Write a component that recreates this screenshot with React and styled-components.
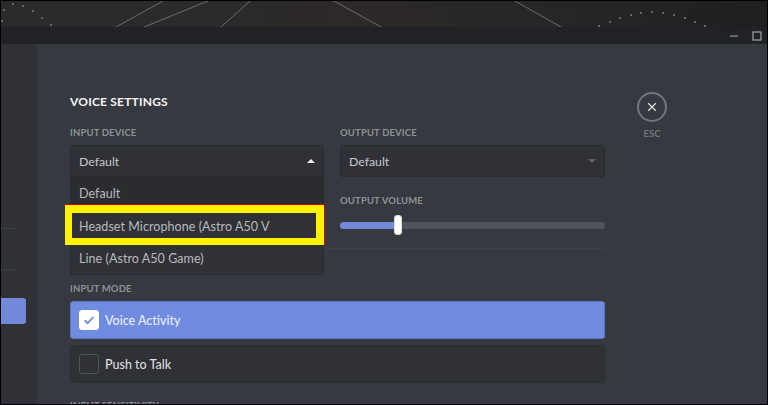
import { createGlobalStyle } from "styled-components";
import styled from "styled-components";

const leftDots = [[2, 20], [4, 9], [13, 3], [23, 5], [33, 10], [42, 17], [51, 24]];
const rightDots = [[215, 25], [226, 21], [236, 17], [247, 14], [257, 12], [268, 11], [279, 12], [290, 14], [301, 17], [311, 21], [321, 25]];
const bannerLines = [
  [115, 26, 162, 0],
  [143, 26, 207, 0],
  [220, 26, 249, 0],
  [333, 0, 380, 26],
  [514, 0, 560, 26],
];

const App = () => {
  return (
    <Frame>
      <GlobalStyle />
      <Banner>
        <svg width="766" height="26" viewBox="0 0 766 26">
          {bannerLines.map(([x1, y1, x2, y2]) => (
            <line key={x1} x1={x1} y1={y1} x2={x2} y2={y2} stroke="#6e6c6b" strokeWidth="1" />
          ))}
          {leftDots.map(([cx, cy]) => (
            <circle key={cx} cx={cx - 1} cy={cy} r="1.1" fill="#77757a" />
          ))}
          {rightDots.map(([cx, cy]) => (
            <circle key={cx} cx={cx + 384 - 1} cy={cy} r="1.1" fill="#77757a" />
          ))}
        </svg>
      </Banner>

      <TitleBar>
        <svg width="10" height="10" viewBox="0 0 10 10">
          <rect x="1" y="4.5" width="8" height="1.2" fill="#8e9297" />
        </svg>
        <svg width="10" height="10" viewBox="0 0 10 10">
          <rect x="1" y="1" width="8" height="8" fill="none" stroke="#a3a6aa" strokeWidth="1.2" />
        </svg>
      </TitleBar>

      <Main>
        <Sidebar>
          <SideLine />
          <SideLine />
          <SideActive />
        </Sidebar>

        <Content>
          <Settings>
            <Heading>VOICE SETTINGS</Heading>

            <Columns>
              <Column>
                <Label>INPUT DEVICE</Label>
                <SelectWrap>
                  <Select $open>
                    Default
                    <Caret $up />
                  </Select>
                  <Dropdown>
                    <Option>Default</Option>
                    <Option>
                      Headset Microphone (Astro A50 V
                      <Highlight />
                    </Option>
                    <Option>Line (Astro A50 Game)</Option>
                  </Dropdown>
                </SelectWrap>
              </Column>

              <Column>
                <Label>OUTPUT DEVICE</Label>
                <Select>
                  Default
                  <Caret />
                </Select>
                <VolumeLabel>OUTPUT VOLUME</VolumeLabel>
                <Track>
                  <TrackFill />
                  <Handle />
                </Track>
              </Column>
            </Columns>

            <Divider />

            <Label>INPUT MODE</Label>
            <ModeList>
              <Mode $active>
                <CheckBox $checked>
                  <svg width="12" height="12" viewBox="0 0 12 12">
                    <path d="M1.5 6.2 L4.6 9.2 L10.5 3" fill="none" stroke="#7289da" strokeWidth="1.8" />
                  </svg>
                </CheckBox>
                Voice Activity
              </Mode>
              <Mode>
                <CheckBox />
                Push to Talk
              </Mode>
            </ModeList>

            <SensitivityLabel>INPUT SENSITIVITY</SensitivityLabel>
          </Settings>

          <CloseColumn>
            <CloseCircle>
              <svg width="10" height="10" viewBox="0 0 10 10">
                <path d="M1.2 1.2 L8.8 8.8 M8.8 1.2 L1.2 8.8" stroke="#dcddde" strokeWidth="1.3" />
              </svg>
            </CloseCircle>
            <EscText>ESC</EscText>
          </CloseColumn>
        </Content>
      </Main>
    </Frame>
  );
};

const GlobalStyle = createGlobalStyle`
  html, body {
    margin: 0;
    padding: 0;
    background: #000;
  }
  * {
    box-sizing: border-box;
  }
`;

const Frame = styled.div`
  width: 768px;
  height: 405px;
  border: 1px solid #000;
  overflow: hidden;
  display: flex;
  flex-direction: column;
  font-family: Lato, "Open Sans", sans-serif;
  background: #36393f;
`;

const Banner = styled.div`
  height: 26px;
  flex: none;
  background: linear-gradient(90deg, #2b2a2c 0%, #2c2928 45%, #262425 80%, #1f1e20 100%);

  svg {
    display: block;
  }
`;

const TitleBar = styled.div`
  height: 17px;
  flex: none;
  background: #202225;
  display: flex;
  justify-content: flex-end;
  align-items: center;
  gap: 13px;
  padding-right: 5px;
`;

const Main = styled.div`
  flex: 1;
  display: flex;
  min-height: 0;
`;

const Sidebar = styled.div`
  width: 36px;
  flex: none;
  background: #2f3136;
  padding-top: 184px;
`;

const SideLine = styled.div`
  width: 18px;
  height: 1px;
  background: #3a3d43;

  & + & {
    margin-top: 40px;
  }
`;

const SideActive = styled.div`
  width: 25px;
  height: 26px;
  margin-top: 28px;
  background: #7289da;
  border-radius: 0 3px 3px 0;
`;

const Content = styled.div`
  flex: 1;
  display: flex;
  padding: 48px 0 0 33px;
  min-width: 0;
`;

const Settings = styled.div`
  width: 535px;
  flex: none;
  padding-top: 3px;
`;

const Heading = styled.h2`
  margin: 0 0 18px;
  height: 14px;
  line-height: 14px;
  font-size: 12px;
  font-weight: 700;
  letter-spacing: 0.2px;
  color: #f6f6f7;
`;

const Columns = styled.div`
  display: grid;
  grid-template-columns: 254px 265px;
  column-gap: 16px;
`;

const Column = styled.div`
  display: flex;
  flex-direction: column;
`;

const Label = styled.div`
  height: 12px;
  line-height: 12px;
  margin-bottom: 6px;
  font-size: 9.5px;
  font-weight: 700;
  letter-spacing: 0.15px;
  color: #8e9297;
`;

const VolumeLabel = styled(Label)`
  margin-top: 18px;
  margin-bottom: 15px;
`;

const SelectWrap = styled.div`
  position: relative;
`;

const Select = styled.div`
  height: 32px;
  padding: 0 8px;
  display: flex;
  align-items: center;
  justify-content: space-between;
  font-size: 12.3px;
  color: #c7c9cb;
  background: #2f3136;
  border: 1px solid #292b2f;
  border-radius: ${(p) => (p.$open ? "3px 3px 0 0" : "3px")};
`;

const Caret = styled.span`
  width: 0;
  height: 0;
  border-left: 4.5px solid transparent;
  border-right: 4.5px solid transparent;
  border-${(p) => (p.$up ? "bottom" : "top")}: 4.5px solid ${(p) => (p.$up ? "#f0f0f0" : "#5f6266")};
`;

const Dropdown = styled.div`
  position: absolute;
  top: 31px;
  left: 0;
  right: 0;
  background: #2f3136;
  border: 1px solid #292b2f;
  border-top-color: #26282b;
  border-radius: 0 0 3px 3px;
  z-index: 2;
`;

const Option = styled.div`
  position: relative;
  height: 32px;
  padding-left: 8px;
  display: flex;
  align-items: center;
  font-size: 12.5px;
  letter-spacing: 0.06px;
  color: #b9bbbe;

  &:first-child {
    height: 33px;
    background: #2a2c30;
  }
`;

const Highlight = styled.span`
  position: absolute;
  top: -5px;
  left: -6px;
  width: 259px;
  height: 40px;
  border: 7px solid #fff200;
  border-top-width: 8px;
  border-right-width: 8px;
  box-shadow: 0 -1px 0 #d00000, 1px 0 0 #d00000;
`;

const Track = styled.div`
  position: relative;
  height: 7px;
  border-radius: 4px;
  background: #4f545c;
`;

const TrackFill = styled.div`
  width: 58px;
  height: 100%;
  border-radius: 4px 0 0 4px;
  background: #7289da;
`;

const Handle = styled.span`
  position: absolute;
  left: 54px;
  top: -7px;
  width: 8px;
  height: 20px;
  border-radius: 3px;
  background: #fff;
  border: 1px solid #dcddde;
`;

const Divider = styled.div`
  height: 1px;
  margin: 19px 0 34px;
  background: #3f4248;
`;

const ModeList = styled.div`
  display: flex;
  flex-direction: column;
  gap: 6px;
`;

const Mode = styled.div`
  height: 38px;
  padding-left: 8px;
  display: flex;
  align-items: center;
  gap: 6px;
  font-size: 12.5px;
  font-weight: 500;
  border-radius: 3px;
  color: ${(p) => (p.$active ? "#e9edfa" : "#dcddde")};
  background: ${(p) => (p.$active ? "#6f8ce0" : "#2f3136")};
  border: 1px solid ${(p) => (p.$active ? "#5f76bd" : "#2b2d31")};
`;

const CheckBox = styled.span`
  width: 20px;
  height: 20px;
  flex: none;
  display: flex;
  align-items: center;
  justify-content: center;
  border-radius: 3px;
  background: ${(p) => (p.$checked ? "#fff" : "transparent")};
  border: 1px solid ${(p) => (p.$checked ? "#fff" : "#4f545c")};
`;

const SensitivityLabel = styled(Label)`
  margin-top: 17px;
`;

const CloseColumn = styled.div`
  margin-left: 32px;
  width: 30px;
  display: flex;
  flex-direction: column;
  align-items: center;
`;

const CloseCircle = styled.div`
  width: 30px;
  height: 30px;
  flex: none;
  display: flex;
  align-items: center;
  justify-content: center;
  border: 2px solid #72767d;
  border-radius: 50%;
`;

const EscText = styled.div`
  margin-top: 6px;
  font-size: 9.5px;
  font-weight: 700;
  color: #72767d;
`;

export default App;
